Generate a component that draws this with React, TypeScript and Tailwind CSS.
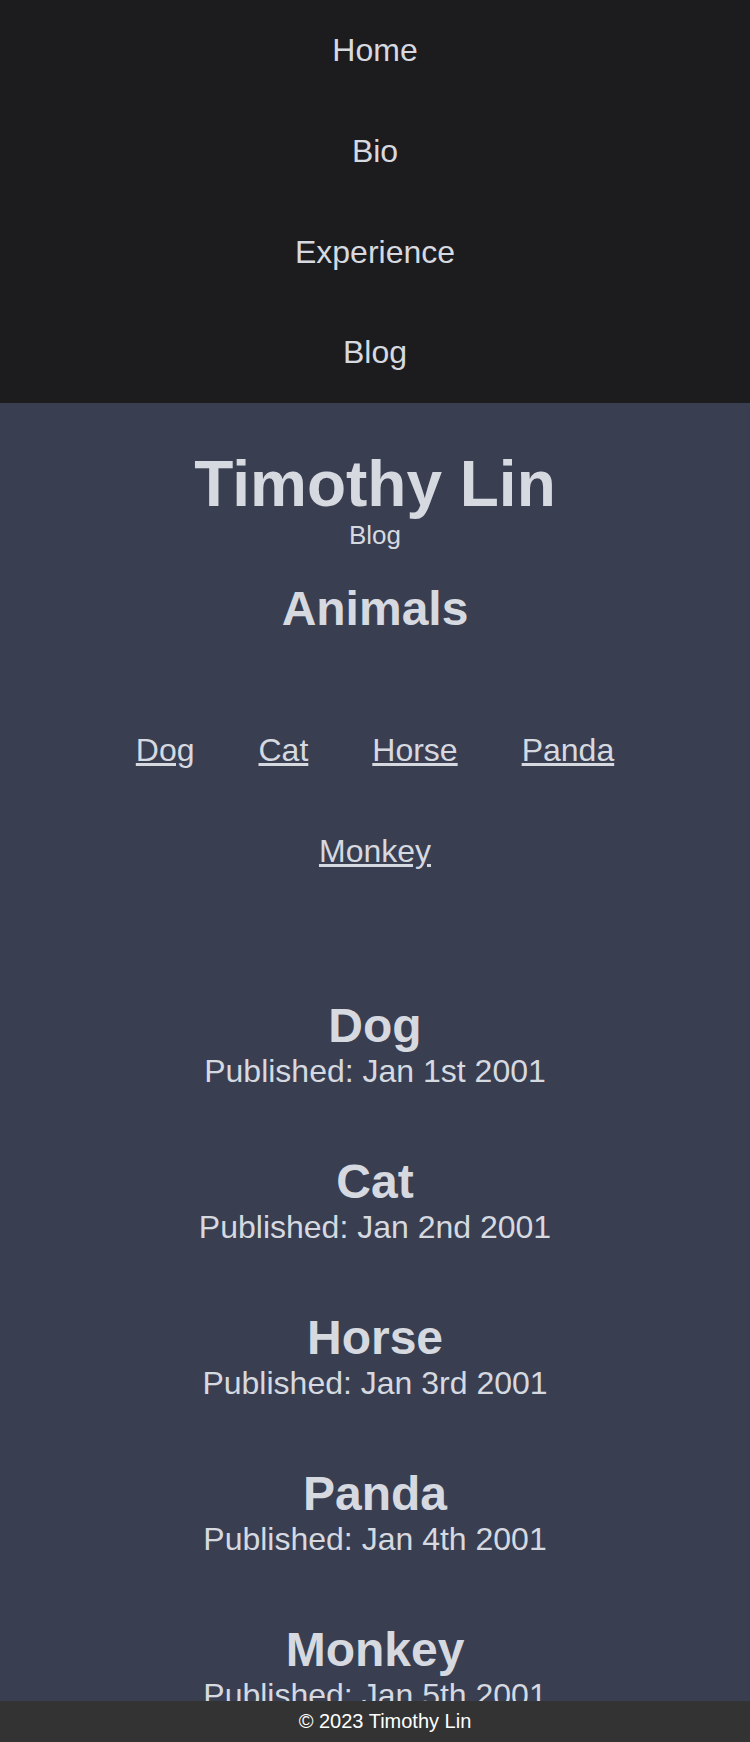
const navLinks = ["Home", "Bio", "Experience", "Blog"];

const posts = [
    { title: "Dog", date: "Jan 1st 2001" },
    { title: "Cat", date: "Jan 2nd 2001" },
    { title: "Horse", date: "Jan 3rd 2001" },
    { title: "Panda", date: "Jan 4th 2001" },
    { title: "Monkey", date: "Jan 5th 2001" },
];

export default function App() {
    return (
        <div className="min-h-screen bg-[#393f51] font-['Liberation_Sans',Arial,sans-serif] leading-[1.15] text-[#d6d9e0]">
            {/* Nav */}
            <nav className="flex flex-col bg-[#1c1c1e]">
                {navLinks.map((link) => (
                    <a
                        key={link}
                        href="#"
                        className="py-8 text-center text-[32px] leading-[1.15]"
                    >
                        {link}
                    </a>
                ))}
            </nav>

            <main className="flex flex-col items-center pt-[45px] text-center">
                <h1 className="text-[64px] leading-[1.15] font-bold">
                    Timothy Lin
                </h1>
                <span className="text-[26px] leading-none">Blog</span>
                <h2 className="mt-[33px] text-[48px] leading-[1.15] font-bold">
                    Animals
                </h2>

                {/* Animal links */}
                <ul className="mt-16 flex w-full max-w-[600px] flex-wrap justify-center">
                    {posts.map((post) => (
                        <li key={post.title} className="px-8 py-8">
                            <a
                                href="#"
                                className="text-[32px] leading-[1.15] underline"
                            >
                                {post.title}
                            </a>
                        </li>
                    ))}
                </ul>

                {/* Posts */}
                <div className="mt-16 flex w-full flex-col">
                    {posts.map((post) => (
                        <div key={post.title} className="py-8">
                            <h3 className="text-[48px] leading-[1.15] font-bold">
                                {post.title}
                            </h3>
                            <p className="text-[32px] leading-[1.15]">
                                Published: {post.date}
                            </p>
                        </div>
                    ))}
                </div>
            </main>

            <footer className="fixed right-0 bottom-0 left-0 bg-[#333333] py-[9px] pl-5 text-center text-[20px] leading-[1.15] text-white">
                © 2023 Timothy Lin
            </footer>
        </div>
    );
}
